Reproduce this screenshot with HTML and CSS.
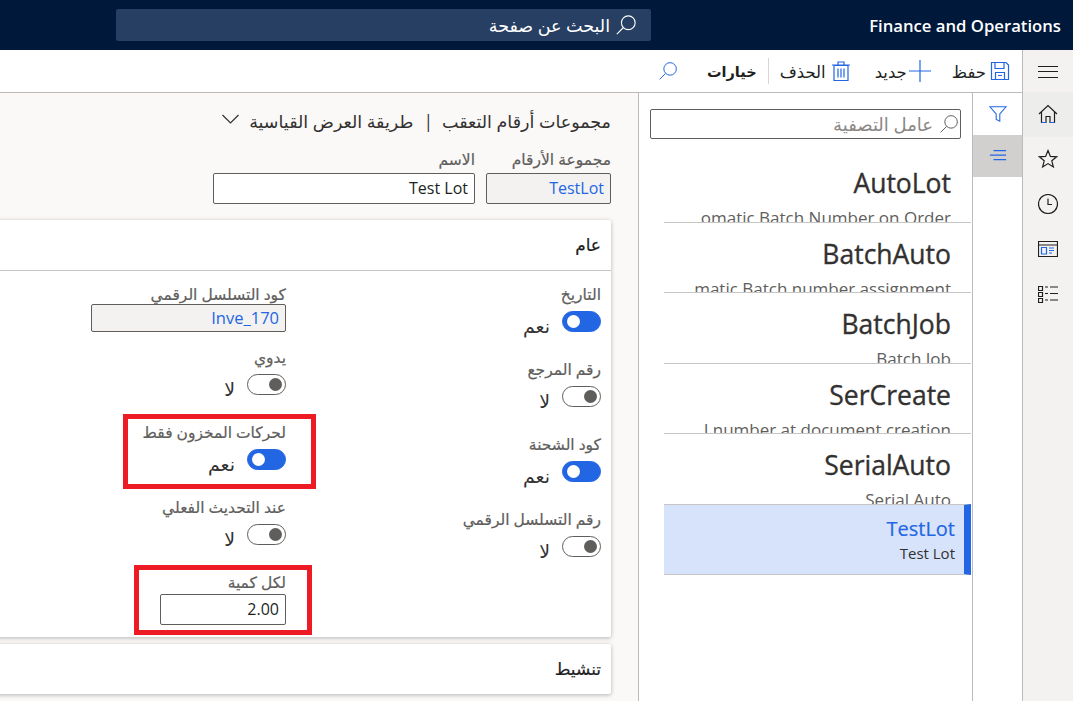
FILE: index.html
```html
<!DOCTYPE html>
<html lang="ar" dir="rtl">
<head>
<meta charset="utf-8">
<title>Finance and Operations</title>
<link rel="stylesheet" href="styles.css">
</head>
<body>
<header class="topbar">
  <div class="brand" dir="ltr">Finance and Operations</div>
  <div class="search">
    <svg class="i22" viewBox="0 0 24 24"><circle cx="14.500" cy="9.500" r="7.500"/><path d="M9 15 2 22"/></svg>
    <span>البحث عن صفحة</span>
  </div>
</header>
<div class="shell">
  <nav class="rail">
    <div class="rail-item first"><svg class="i22 dark thin" viewBox="0 0 22 22"><path d="M1 7.500h20M1 12.500h20M1 18.500h20"/></svg></div>
    <div class="rail-item home"><svg class="i20 dark" viewBox="0 0 20 20"><path d="M1 10 10 1.500 19 10M3.500 8v10.500h4.500v-6h4v6h4.500V8"/><path class="blue" d="M3.500 18.500h4.500M12 18.500h4.500"/></svg></div>
    <div class="rail-item"><svg class="i20 dark" viewBox="0 0 20 20"><path d="m10 1.500 2.400 5.900 6.300.4-4.900 4 1.600 6.200L10 14.600 4.600 18l1.600-6.200-4.900-4 6.300-.4z"/></svg></div>
    <div class="rail-item"><svg class="i20 dark" viewBox="0 0 20 20"><circle cx="10" cy="10" r="9.500"/><path d="M10 4.500V10.500H14"/></svg></div>
    <div class="rail-item"><svg class="i20 dark" viewBox="0 0 20 20"><path d="M.5 2.500h19v15H.5zM.5 6h19"/><path class="blue" d="M3.500 8.500h5v6.500h-5zM11 9h5M11 11.500h5M11 14h3"/></svg></div>
    <div class="rail-item"><svg class="i20 dark" viewBox="0 0 20 20"><path d="M.5 2.500h4v4h-4zM.5 8.500h4v4h-4zM.5 14.500h4v4h-4z"/><path d="M7 3h3M12 3h8M7 9.500h3M12 9.500h8M7 16h3M12 16h8"/></svg></div>
  </nav>
  <div class="workspace">
    <div class="actions">
      <div class="action act-save"><svg class="i20 ac" viewBox="0 0 20 20"><path d="M1.500 1.500h14.500l2.500 2.500v14.500h-17zM5 1.500v6h9v-6M5.500 18.500v-7h9v7M8 14.500h4"/></svg><span>حفظ</span></div>
      <div class="action act-new"><svg class="i22 ac" viewBox="0 0 22 22"><path d="M11 0v22M0 11h22"/></svg><span>جديد</span></div>
      <div class="action act-del"><svg class="i20 ac" viewBox="0 0 20 20"><path d="M3 4.500h14v15H3zM1 4h18M7 4V1h6v3M7 7.500v9M10 7.500v9M13 7.500v9"/></svg><span>الحذف</span></div>
      <div class="divider"></div>
      <div class="action act-opt">خيارات</div>
      <svg class="i20 ac" viewBox="0 0 24 24"><circle cx="14.500" cy="9.500" r="7.500"/><path d="M9 15 2 22"/></svg>
    </div>
    <div class="panes">
      <div class="tabs">
        <div class="tab"><svg class="i18 ac" viewBox="0 0 20 20"><path d="M1 2h18l-7 8v8l-4-2v-6z"/></svg></div>
        <div class="tab active"><svg class="i18 ac" viewBox="0 0 20 20"><path d="M5 4h14M1 9h18M5 14h14"/></svg></div>
      </div>
      <aside class="listpane">
        <div class="filter">
          <svg class="i20 grey" viewBox="0 0 24 24"><circle cx="14.500" cy="9.500" r="7.500"/><path d="M9 15 2 22"/></svg>
          <span>عامل التصفية</span>
        </div>
        <ul class="list">
          <li class="row"><div class="row-title" dir="ltr">AutoLot</div><div class="row-sub" dir="ltr">omatic Batch Number on Order</div></li>
          <li class="row"><div class="row-title" dir="ltr">BatchAuto</div><div class="row-sub" dir="ltr">matic Batch number assignment</div></li>
          <li class="row"><div class="row-title" dir="ltr">BatchJob</div><div class="row-sub" dir="ltr">Batch Job</div></li>
          <li class="row"><div class="row-title" dir="ltr">SerCreate</div><div class="row-sub" dir="ltr">l number at document creation</div></li>
          <li class="row"><div class="row-title" dir="ltr">SerialAuto</div><div class="row-sub" dir="ltr">Serial Auto</div></li>
          <li class="row selected"><div class="sel-title" dir="ltr">TestLot</div><div class="sel-sub" dir="ltr">Test Lot</div></li>
        </ul>
      </aside>
      <main class="detail">
        <div class="crumb">
          <span>مجموعات أرقام التعقب</span><span class="sep">|</span><span>طريقة العرض القياسية</span>
          <svg class="chev" viewBox="0 0 18 10"><path d="M1 1l8 8 8-8"/></svg>
        </div>
        <div class="idfields">
          <div class="idfield groupid"><label>مجموعة الأرقام</label><div class="input ro link" dir="ltr">TestLot</div></div>
          <div class="idfield nameid"><label>الاسم</label><div class="input" dir="ltr">Test Lot</div></div>
        </div>
        <section class="card general">
          <h2 class="card-head">عام</h2>
          <div class="cols">
            <div class="col col-a">
              <div class="field"><label>التاريخ</label><div class="tg"><i class="toggle on"></i><span>نعم</span></div></div>
              <div class="field"><label>رقم المرجع</label><div class="tg"><i class="toggle"></i><span>لا</span></div></div>
              <div class="field"><label>كود الشحنة</label><div class="tg"><i class="toggle on"></i><span>نعم</span></div></div>
              <div class="field"><label>رقم التسلسل الرقمي</label><div class="tg"><i class="toggle"></i><span>لا</span></div></div>
            </div>
            <div class="col col-b">
              <div class="field serial"><label>كود التسلسل الرقمي</label><div class="input ro link small" dir="ltr">Inve_170</div></div>
              <div class="field manual"><label>يدوي</label><div class="tg"><i class="toggle"></i><span>لا</span></div></div>
              <div class="field"><label>لحركات المخزون فقط</label><div class="tg"><i class="toggle on"></i><span>نعم</span></div></div>
              <div class="field"><label>عند التحديث الفعلي</label><div class="tg"><i class="toggle"></i><span>لا</span></div></div>
              <div class="field qty"><label>لكل كمية</label><div class="input qty-input" dir="ltr">2.00</div></div>
            </div>
          </div>
        </section>
        <section class="card activation"><h2 class="card-head plain">تنشيط</h2></section>
      </main>
    </div>
  </div>
</div>
<div class="mark mark-a"></div>
<div class="mark mark-b"></div>
</body>
</html>
```

FILE: styles.css
```css
* { box-sizing: border-box; }
html, body { margin: 0; width: 1073px; height: 701px; overflow: hidden; background: #fff; }
body { position: relative; font-family: "Open Sans", "DejaVu Sans", sans-serif; font-size: 15px; color: #201f1e; }
svg { fill: none; stroke: currentColor; stroke-width: 1.2; display: block; flex: none; }
.i18 { width: 18px; height: 18px; }
.i20 { width: 20px; height: 20px; }
.i22 { width: 22px; height: 22px; }
.dark { color: #201f1e; }
.dark .blue { stroke: #2266e3; }
.thin { stroke-width: 1; }
.ac { color: #2266e3; }
.grey { color: #605e5c; }

.topbar { height: 50px; background: #00183a; color: #fff; display: flex; align-items: center; justify-content: space-between; padding: 0 12px 0 116px; }
.brand { font-size: 16.700px; font-weight: 600; white-space: nowrap; }
.search { width: 535px; height: 32px; background: #273f63; border-radius: 2px; display: flex; align-items: center; gap: 5px; padding: 0 14px 0 0; font-size: 17.500px; }

.shell { display: flex; height: 651px; }
.rail { width: 51px; background: #f3f2f1; border-left: 1px solid #bdbbb9; flex: none; }
.rail-item { height: 45px; display: flex; align-items: center; justify-content: center; padding-bottom: 2px; }
.rail-item.first { height: 42px; }
.rail-item.home { background: #ededec; }

.workspace { flex: 1; min-width: 0; display: flex; flex-direction: column; }
.actions { height: 43px; border-bottom: 1px solid #bdbbb9; display: flex; align-items: center; padding-right: 12px; font-size: 16.500px; }
.action { display: flex; align-items: center; }
.act-save { gap: 4px; margin-left: 21px; }
.act-new { gap: 2px; margin-left: 24px; }
.act-del { gap: 5px; margin-left: 11px; }
.divider { width: 1px; height: 26px; background: #d8d6d4; margin-left: 11px; }
.act-opt { font-weight: 700; font-size: 14.500px; margin-left: 29px; }
.panes { flex: 1; display: flex; min-height: 0; }

.tabs { width: 50px; flex: none; border-left: 1px solid #bdbbb9; }
.tab { height: 42px; display: flex; align-items: center; justify-content: center; }
.tab.active { background: #d2d0ce; }

.listpane { width: 334px; flex: none; border-left: 1px solid #bdbbb9; padding-top: 16px; }
.filter { width: 311px; height: 30px; margin-right: 11px; border: 1px solid #605e5c; border-radius: 2px; display: flex; align-items: center; gap: 6px; padding-right: 1px; color: #8a8886; font-size: 18px; }
.list { list-style: none; margin: 13px 1px 0 0; padding: 0; width: 307px; }
.row { height: 70.500px; border-bottom: 1px solid #c8c6c4; overflow: hidden; padding: 0 20px 0 0; }
.row-title { font-size: 26.500px; line-height: 36px; padding-top: 13px; color: #323130; box-sizing: content-box; height: 36px; text-align: right; font-weight: 400; -webkit-text-stroke: .35px #323130; }
.row-sub { font-size: 17px; line-height: 22px; margin-top: 6px; color: #605e5c; text-align: right; white-space: nowrap; }
.selected { background: #d7e3fa; border-right: 7px solid #2266e3; padding-right: 9px; border-top: 1px solid #c8c6c4; margin-top: -1px; height: 71.500px; }
.sel-title { font-size: 20px; line-height: 27px; color: #2266e3; text-align: right; padding-top: 10px; box-sizing: content-box; -webkit-text-stroke: .2px #2266e3; }
.sel-sub { font-size: 15px; line-height: 22px; color: #323130; text-align: right; }

.detail { flex: 1; min-width: 0; background: #faf9f8; padding: 16px 27px 0 0; }
.crumb { display: flex; align-items: center; height: 24px; font-size: 17.500px; color: #323130; }
.crumb .sep { margin: 0 9px 0 10px; }
.chev { width: 19px; height: 10px; margin-right: 9px; margin-top: -4px; }
.idfields { display: flex; gap: 11px; margin-top: 16px; }
label { display: block; color: #605e5c; font-size: 15.500px; font-weight: 400; line-height: 20px; white-space: nowrap; -webkit-text-stroke: .2px #605e5c; }
.idfield label { height: 24px; }
.input { height: 31px; border: 1px solid #605e5c; border-radius: 2px; background: #fff; font-size: 16px; line-height: 29px; text-align: right; padding: 0 6px; color: #201f1e; }
.input.ro { background: #f3f2f1; }
.input.link { color: #2266e3; }
.groupid { width: 125px; }
.nameid { width: 262px; }

.card { background: #fff; margin-left: -10px; border-radius: 2px; box-shadow: 0 1px 4px rgba(0, 0, 0, .28); }
.general { height: 417px; margin-top: 16px; }
.activation { height: 50px; margin-top: 7px; }
.card-head { margin: 0; height: 51px; padding: 0 10px 0 0; border-bottom: 1px solid #c8c6c4; font-size: 17px; font-weight: 400; line-height: 50px; color: #201f1e; -webkit-text-stroke: .2px #201f1e; }
.card-head.plain { border: 0; }

.cols { display: flex; padding-right: 10px; }
.col { flex: none; }
.col-a { width: 315px; padding-top: 13px; }
.col-b { padding-top: 13px; width: 200px; }
.field { height: 75px; }
.tg { display: flex; gap: 12px; margin-top: 7px; align-items: flex-start; font-size: 19px; color: #323130; }
.tg span { line-height: 24px; margin-top: 3px; }
.toggle { display: block; width: 39px; height: 21px; border: 1px solid #605e5c; border-radius: 11px; background: #fff; position: relative; flex: none; }
.toggle::after { content: ""; position: absolute; right: 3px; top: 3px; width: 13px; height: 13px; border-radius: 50%; background: #605e5c; }
.toggle.on { background: #2266e3; border-color: #2266e3; }
.toggle.on::after { right: auto; left: 4px; background: #fff; }
.field.serial { height: 63px; }
.field.serial label { height: 20px; }
.field.manual { height: 75px; }
.input.small { width: 195px; height: 28px; line-height: 26px; font-size: 16.500px; padding-left: 7px; }
.qty label { margin-bottom: 2px; }
.qty-input { width: 126px; }

.mark { position: absolute; border: 5px solid #ed1c24; }
.mark-a { left: 123px; top: 414px; width: 193px; height: 75px; }
.mark-b { left: 134px; top: 565px; width: 178px; height: 70px; }
```
